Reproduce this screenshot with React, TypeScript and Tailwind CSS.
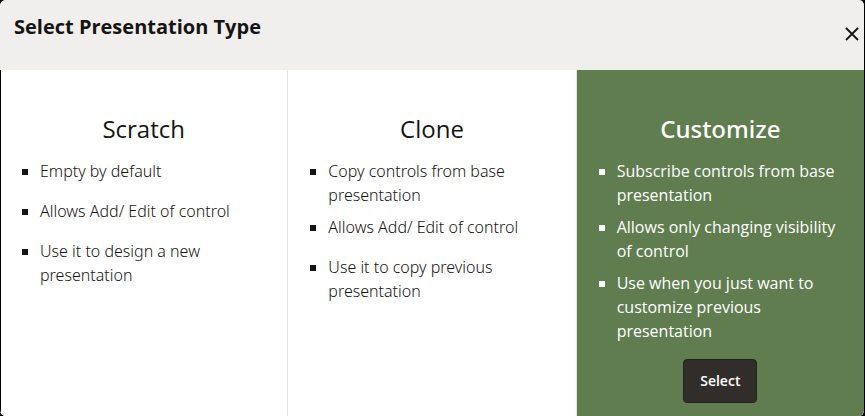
type Option = {
  title: string;
  points: string[];
  selected?: boolean;
};

const options: Option[] = [
  {
    title: "Scratch",
    points: ["Empty by default", "Allows Add/ Edit of control", "Use it to design a new presentation"],
  },
  {
    title: "Clone",
    points: ["Copy controls from base presentation", "Allows Add/ Edit of control", "Use it to copy previous presentation"],
  },
  {
    title: "Customize",
    points: [
      "Subscribe controls from base presentation",
      "Allows only changing visibility of control",
      "Use when you just want to customize previous presentation",
    ],
    selected: true,
  },
];

function OptionCard({ title, points, selected }: Option) {
  return (
    <section
      className={
        selected
          ? "flex flex-col items-center bg-[#5f7d4f] px-[22px] pt-[43px] pb-3 text-white"
          : "flex flex-col items-center bg-white px-[22px] pt-[43px] pb-3 text-[#161513] first:shadow-[inset_1px_0_0_#000]"
      }
    >
      <h2
        className={
          selected
            ? "font-['Noto_Sans',sans-serif] text-2xl leading-8 font-medium"
            : "text-2xl leading-8 font-normal"
        }
      >
        {title}
      </h2>
      <ul className="mt-[14px] w-full">
        {points.map((point) => (
          <li key={point} className="flex min-h-10 gap-3 pb-2">
            <span className={selected ? "mt-[10px] size-[6px] shrink-0 bg-white" : "mt-[10px] size-[6px] shrink-0 bg-[#161513]"} />
            <span className={selected ? "text-base leading-6 font-normal" : "font-['Noto_Sans',sans-serif] text-base leading-6 font-light"}>{point}</span>
          </li>
        ))}
      </ul>
      {selected && (
        <button type="button" className="mt-2 h-11 rounded-[4px] border border-[#262220] bg-[#312d2a] px-4 text-sm font-semibold text-white">
          Select
        </button>
      )}
    </section>
  );
}

export default function App() {
  return (
    <div className="min-h-screen bg-black font-['Open_Sans','Noto_Sans',sans-serif]">
      <div
        role="dialog"
        aria-labelledby="dialog-title"
        className="flex min-h-screen flex-col overflow-hidden rounded-[6px] border-r border-black bg-white"
      >
        <header className="flex h-[70px] shrink-0 justify-between bg-[#f0efed] pt-3 pr-[2px] pl-[14px]">
          <h1 id="dialog-title" className="text-xl leading-[30px] font-bold text-[#161513]">
            Select Presentation Type
          </h1>
          <button type="button" aria-label="Close" className="mt-3 flex size-5 items-center justify-center self-start text-[#161513]">
            <svg viewBox="0 0 14 14" className="size-[14px]" fill="none" stroke="currentColor" strokeWidth="1.8">
              <path d="M1 1L13 13M13 1L1 13" />
            </svg>
          </button>
        </header>
        <main className="grid grow grid-cols-3 gap-px bg-[#e3e3e3]">
          {options.map((option) => (
            <OptionCard key={option.title} {...option} />
          ))}
        </main>
      </div>
    </div>
  );
}
